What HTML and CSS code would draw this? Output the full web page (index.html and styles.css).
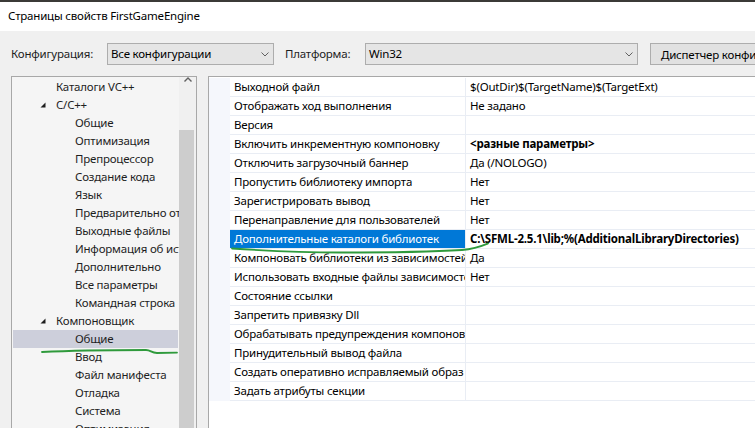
FILE: index.html
```html
<!DOCTYPE html>
<html lang="ru">
<head>
<meta charset="utf-8">
<title>Страницы свойств FirstGameEngine</title>
<link rel="stylesheet" href="styles.css">
</head>
<body>
<div class="page">
  <div class="topstrip"></div>
  <div class="titlebar">Страницы свойств FirstGameEngine</div>
  <div class="client">
    <div class="toolbar">
      <span class="lbl lbl-config">Конфигурация:</span>
      <div class="combo combo-config">
        <span class="combo-text">Все конфигурации</span>
        <span class="combo-arrow"><svg width="8" height="5" viewBox="0 0 8 5"><path d="M0.5 0.5 L4 4 L7.5 0.5" fill="none" stroke="#606060" stroke-width="1"/></svg></span>
      </div>
      <span class="lbl lbl-plat">Платформа:</span>
      <div class="combo combo-plat">
        <span class="combo-text">Win32</span>
        <span class="combo-arrow"><svg width="8" height="5" viewBox="0 0 8 5"><path d="M0.5 0.5 L4 4 L7.5 0.5" fill="none" stroke="#606060" stroke-width="1"/></svg></span>
      </div>
      <button class="btn">Диспетчер конфигураций...</button>
    </div>
    <div class="main">
      <div class="tree">
        <div class="tree-items">
          <div class="ti l1">Каталоги VC++</div>
          <div class="ti l1 open"><svg class="exp" width="6" height="6" viewBox="0 0 6 6"><polygon points="5.5,0.5 5.5,5.5 0.5,5.5" fill="#1e1e1e"/></svg>C/C++</div>
          <div class="ti l2">Общие</div>
          <div class="ti l2">Оптимизация</div>
          <div class="ti l2">Препроцессор</div>
          <div class="ti l2">Создание кода</div>
          <div class="ti l2">Язык</div>
          <div class="ti l2">Предварительно откомпилированные заголовки</div>
          <div class="ti l2">Выходные файлы</div>
          <div class="ti l2">Информация об источнике</div>
          <div class="ti l2">Дополнительно</div>
          <div class="ti l2">Все параметры</div>
          <div class="ti l2">Командная строка</div>
          <div class="ti l1 open"><svg class="exp" width="6" height="6" viewBox="0 0 6 6"><polygon points="5.5,0.5 5.5,5.5 0.5,5.5" fill="#1e1e1e"/></svg>Компоновщик</div>
          <div class="ti l2 sel">Общие</div>
          <div class="ti l2">Ввод</div>
          <div class="ti l2">Файл манифеста</div>
          <div class="ti l2">Отладка</div>
          <div class="ti l2">Система</div>
          <div class="ti l2">Оптимизация</div>
        </div>
        <div class="scrollbar">
          <div class="sb-up"><svg width="8" height="5" viewBox="0 0 8 5"><path d="M0.5 4.5 L4 1 L7.5 4.5" fill="none" stroke="#606060" stroke-width="1.4"/></svg></div>
          <div class="sb-track"><div class="sb-thumb"></div></div>
        </div>
      </div>
      <div class="grid">
        <div class="row"><div class="m"></div><div class="n">Выходной файл</div><div class="v">$(OutDir)$(TargetName)$(TargetExt)</div></div>
        <div class="row"><div class="m"></div><div class="n">Отображать ход выполнения</div><div class="v">Не задано</div></div>
        <div class="row"><div class="m"></div><div class="n">Версия</div><div class="v"></div></div>
        <div class="row"><div class="m"></div><div class="n">Включить инкрементную компоновку</div><div class="v b">&lt;разные параметры&gt;</div></div>
        <div class="row"><div class="m"></div><div class="n">Отключить загрузочный баннер</div><div class="v">Да (/NOLOGO)</div></div>
        <div class="row"><div class="m"></div><div class="n">Пропустить библиотеку импорта</div><div class="v">Нет</div></div>
        <div class="row"><div class="m"></div><div class="n">Зарегистрировать вывод</div><div class="v">Нет</div></div>
        <div class="row"><div class="m"></div><div class="n">Перенаправление для пользователей</div><div class="v">Нет</div></div>
        <div class="row selrow"><div class="m"></div><div class="n">Дополнительные каталоги библиотек</div><div class="v b">C:\SFML-2.5.1\lib;%(AdditionalLibraryDirectories)</div></div>
        <div class="row"><div class="m"></div><div class="n">Компоновать библиотеки из зависимостей</div><div class="v">Да</div></div>
        <div class="row"><div class="m"></div><div class="n">Использовать входные файлы зависимостей</div><div class="v">Нет</div></div>
        <div class="row"><div class="m"></div><div class="n">Состояние ссылки</div><div class="v"></div></div>
        <div class="row"><div class="m"></div><div class="n">Запретить привязку Dll</div><div class="v"></div></div>
        <div class="row"><div class="m"></div><div class="n">Обрабатывать предупреждения компоновщика как ошибки</div><div class="v"></div></div>
        <div class="row"><div class="m"></div><div class="n">Принудительный вывод файла</div><div class="v"></div></div>
        <div class="row"><div class="m"></div><div class="n">Создать оперативно исправляемый образ</div><div class="v"></div></div>
        <div class="row"><div class="m"></div><div class="n">Задать атрибуты секции</div><div class="v"></div></div>
      </div>
    </div>
  </div>
  <svg class="ink ink-left" width="150" height="10" viewBox="0 0 150 10"><path d="M1 5 C 30 3.5, 80 3, 105 3 C 110 3, 110 6, 116 6 L 136 5.6" fill="none" stroke="#2f9a3c" stroke-width="1.8" stroke-linecap="round"/></svg>
  <svg class="ink ink-right" width="262" height="14" viewBox="0 0 262 14"><path d="M2 6.5 C 40 9, 80 10.5, 110 10.5 C 160 10.5, 200 10, 232 8 C 245 7, 252 4, 258 1.5" fill="none" stroke="#2f9a3c" stroke-width="1.8" stroke-linecap="round"/></svg>
</div>
</body>
</html>
```

FILE: styles.css
```css
* { box-sizing: border-box; }
html, body { margin: 0; padding: 0; }
body {
  width: 755px;
  height: 428px;
  overflow: hidden;
  font-family: "Noto Sans", "Open Sans", sans-serif;
  font-size: 11.5px;
  letter-spacing: -0.2px;
  color: #000;
  background: #f0f0f0;
}
.page {
  position: relative;
  width: 755px;
  height: 428px;
  overflow: hidden;
}
.topstrip {
  height: 2px;
  background: #3b3a37;
}
.titlebar {
  height: 29px;
  background: #fff;
  padding-left: 8px;
  line-height: 28px;
  white-space: nowrap;
}
.client {
  background: #f0f0f0;
}
.toolbar {
  height: 45px;
  padding-top: 12px;
  display: flex;
  align-items: flex-start;
  white-space: nowrap;
}
.lbl {
  line-height: 22px;
  height: 22px;
  color: #1e1e1e;
}
.lbl-config { flex: 0 0 96px; margin-left: 11px; }
.lbl-plat { flex: 0 0 80px; margin-left: 11px; }
.combo {
  height: 22px;
  background: #e5e5e5;
  border: 1px solid #adadad;
  display: flex;
  align-items: center;
}
.combo-config { flex: 0 0 167px; }
.combo-plat { flex: 0 0 273px; }
.combo-text {
  flex: 1;
  padding-left: 3px;
  line-height: 20px;
}
.combo-arrow {
  flex: 0 0 17px;
  display: flex;
  justify-content: center;
  align-items: center;
  height: 20px;
}
.btn {
  flex: 0 0 140px;
  margin-left: 12px;
  height: 22px;
  background: #e1e1e1;
  border: 1px solid #adadad;
  font: inherit;
  letter-spacing: inherit;
  color: #000;
  text-align: left;
  padding: 0 0 0 10px;
  white-space: nowrap;
  overflow: hidden;
}
.main {
  display: flex;
  align-items: flex-start;
  padding-left: 11px;
  height: 352px;
}
.tree {
  flex: 0 0 186px;
  height: 370px;
  border: 1px solid #a8a8a8;
  background: #f5f5f5;
  display: flex;
}
.tree-items {
  flex: 0 0 167px;
  padding-top: 1px;
  overflow: hidden;
}
.ti {
  height: 18px;
  line-height: 18px;
  white-space: nowrap;
  overflow: hidden;
  color: #1e1e1e;
  position: relative;
}
.ti.l1 { padding-left: 44px; }
.ti.l2 { padding-left: 63px; }
.ti.sel {
  background: #cdcfdb;
  margin: 0 1px;
  padding-left: 62px;
}
.exp {
  position: absolute;
  left: 28px;
  top: 6px;
}
.scrollbar {
  flex: 0 0 17px;
  background: #f0f0f0;
  display: flex;
  flex-direction: column;
}
.sb-up {
  height: 18px;
  display: flex;
  justify-content: center;
  align-items: center;
}
.sb-track {
  flex: 1;
  padding-top: 48px;
}
.sb-thumb {
  width: 15px;
  height: 400px;
  background: #cdcdcd;
}
.grid {
  flex: 1;
  margin-left: 11px;
  height: 370px;
  border-left: 1px solid #a8a8a8;
  border-top: 1px solid #a8a8a8;
  background: #fff;
  padding-top: 1px;
}
.row {
  display: flex;
  height: 19px;
}
.row .m {
  flex: 0 0 21px;
  background: #f5f7fc;
}
.row .n {
  flex: 0 0 236px;
  border-right: 1px solid #e9edf4;
  border-bottom: 1px solid #e9edf4;
  padding-left: 4px;
  line-height: 18px;
  white-space: nowrap;
  overflow: hidden;
  color: #000;
}
.row .v {
  flex: 1;
  border-bottom: 1px solid #e9edf4;
  padding-left: 4px;
  line-height: 18px;
  white-space: nowrap;
  overflow: hidden;
}
.row .v.b { font-weight: bold; }
.selrow .n {
  background: #0078d7;
  color: #fff;
}
.ink {
  position: absolute;
  overflow: visible;
}
.ink-left { left: 41px; top: 347px; }
.ink-right { left: 230px; top: 242px; }
```
